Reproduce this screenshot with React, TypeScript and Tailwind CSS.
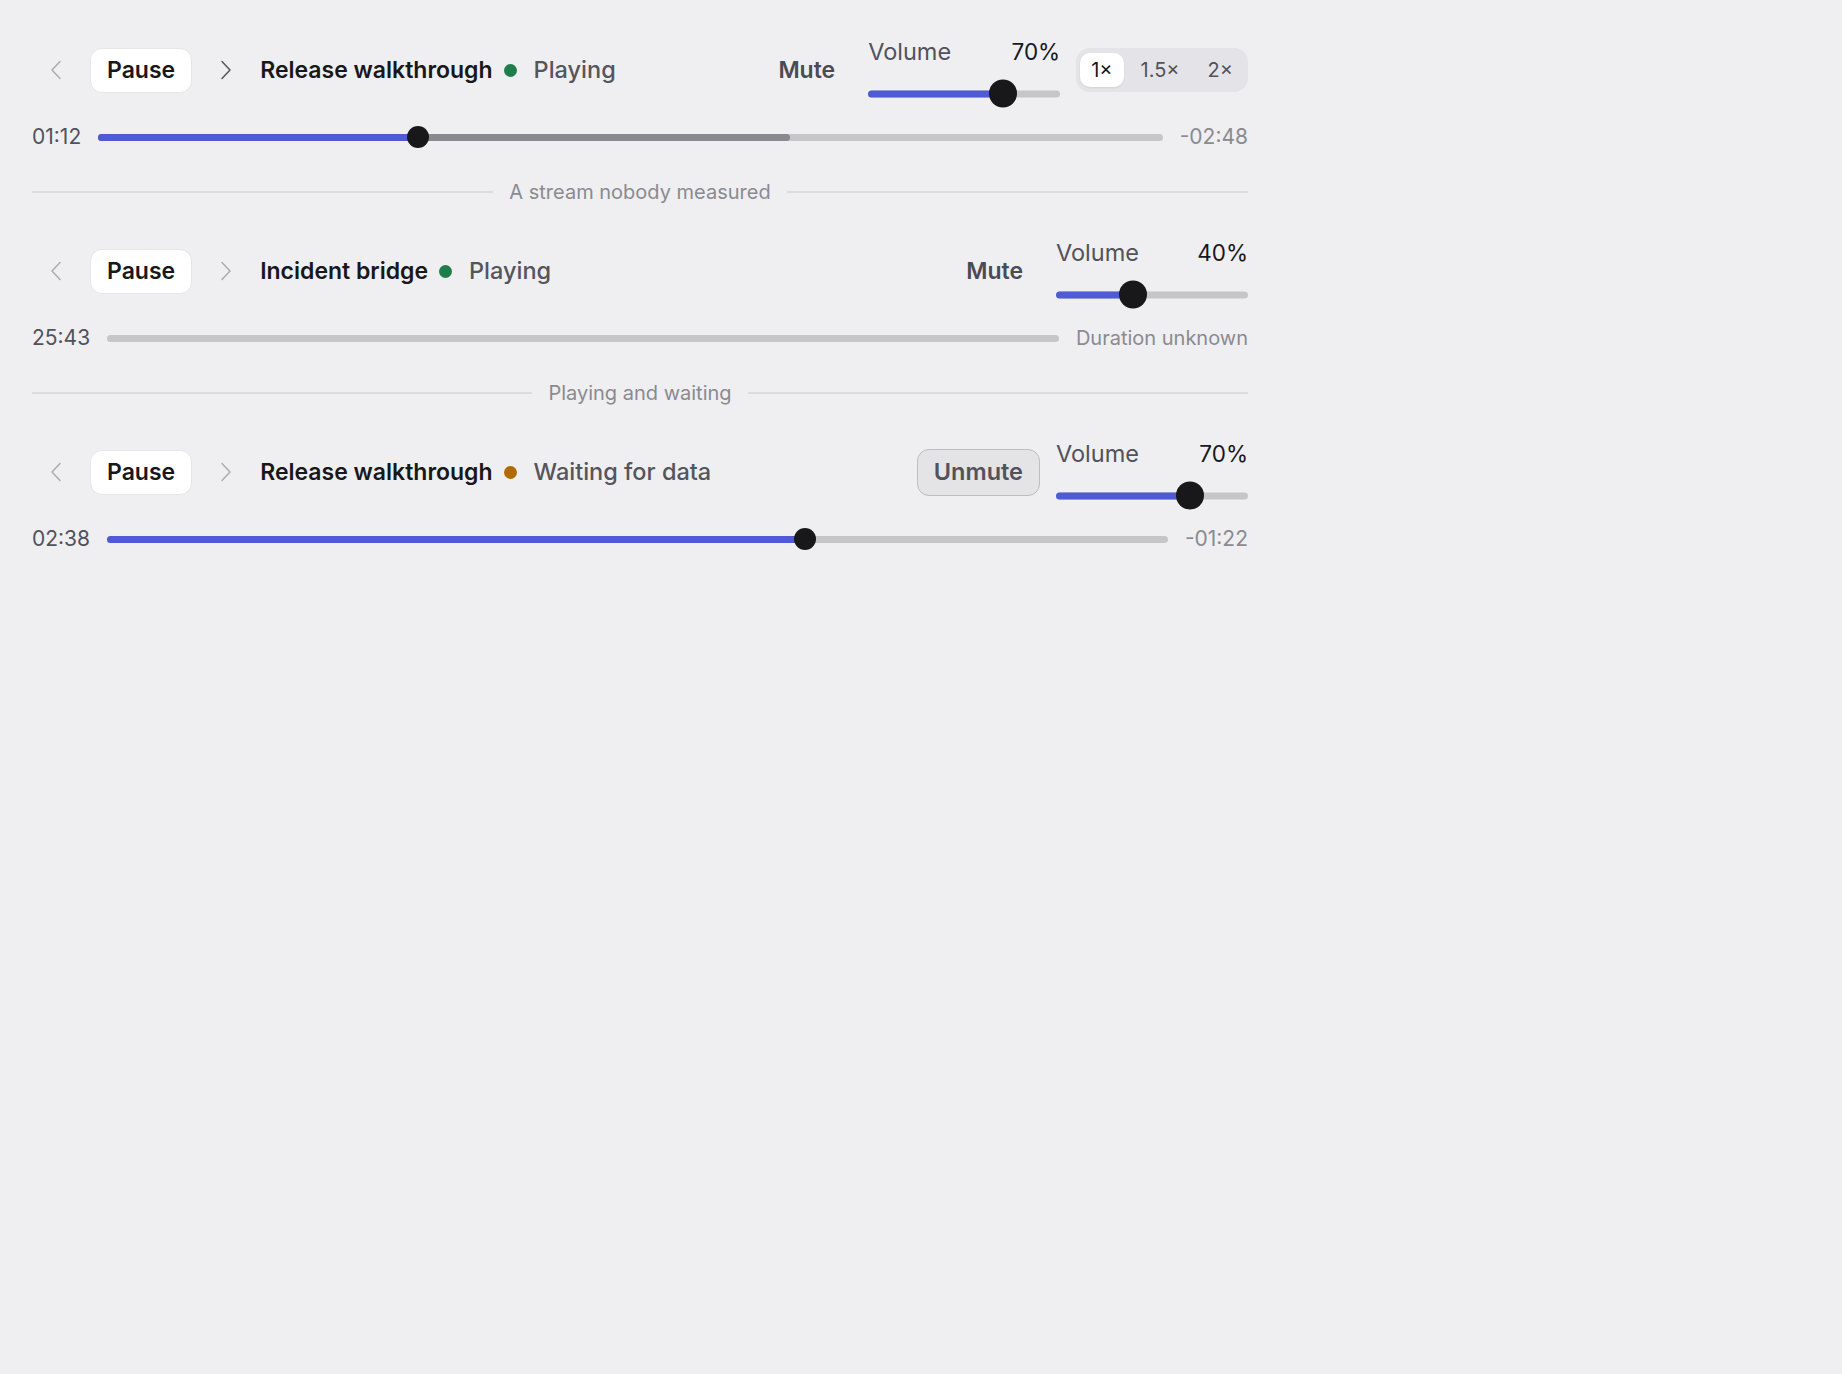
import React from "react";

type PlayerProps = {
  title: string;
  dot: string;
  status: string;
  muted: boolean;
  volume: number;
  showSpeed: boolean;
  time: string;
  right: string;
  rightSize: string;
  progress: number | null;
  buffered?: number;
  nextActive: boolean;
};

function Chevron({ dir, className }: { dir: "left" | "right"; className: string }) {
  return (
    <svg width="12" height="20" viewBox="0 0 12 20" fill="none" className={className}>
      <path
        d={dir === "left" ? "M10 1.5 L2 10 L10 18.5" : "M2 1.5 L10 10 L2 18.5"}
        stroke="currentColor"
        strokeWidth="1.5"
        strokeLinecap="round"
        strokeLinejoin="round"
      />
    </svg>
  );
}

function Volume({ value }: { value: number }) {
  return (
    <div className="w-[192px] flex flex-col gap-[21px]">
      <div className="flex justify-between items-center h-[26px] leading-[26px]">
        <span className="text-[23.5px] text-[#52525b]">Volume</span>
        <span className="text-[22.5px] text-[#18181b]">{value}%</span>
      </div>
      <div className="relative h-4">
        <div className="absolute left-0 right-0 top-1/2 -translate-y-1/2 h-[7px] rounded-full bg-[#c6c6c9]">
          <div className="absolute left-0 top-0 bottom-0 rounded-full bg-[#4f5bd5]" style={{ width: `${value}%` }} />
          <div
            className="absolute top-1/2 -translate-y-1/2 -translate-x-1/2 w-[28px] h-[28px] rounded-full bg-[#18181b]"
            style={{ left: `${value}%` }}
          />
        </div>
      </div>
    </div>
  );
}

function Speed() {
  return (
    <div className="flex items-center gap-[6px] h-[44px] p-1 rounded-[14px] bg-[#e4e4e8]">
      <div className="h-[34px] px-[11px] flex items-center rounded-[10px] bg-white shadow-[0_1px_2px_rgba(0,0,0,0.08)] text-[20px] text-[#18181b]">
        1×
      </div>
      <div className="h-[34px] px-[11px] flex items-center text-[20px] text-[#52525b]">1.5×</div>
      <div className="h-[34px] px-[11px] flex items-center text-[20px] text-[#52525b]">2×</div>
    </div>
  );
}

function Player(p: PlayerProps) {
  return (
    <div className="flex flex-col">
      <div className="h-[64px] flex items-center">
        <div className="flex items-center gap-[10px]">
          <div className="w-[48px] h-[44px] flex items-center justify-center">
            <Chevron dir="left" className="text-[#ababb1]" />
          </div>
          <div className="h-[45px] px-4 flex items-center rounded-[12px] bg-white border border-[#e6e6e9] text-[23px] font-semibold text-[#18181b]">
            Pause
          </div>
          <div className="w-[48px] h-[44px] flex items-center justify-center">
            <Chevron dir="right" className={p.nextActive ? "text-[#55555c]" : "text-[#ababb1]"} />
          </div>
          <span className="text-[23px] font-semibold text-[#18181b]">{p.title}</span>
          <span className="ml-[1px] w-[13px] h-[13px] rounded-full" style={{ backgroundColor: p.dot }} />
          <span className="ml-[7px] text-[23.5px] font-medium text-[#55555d]">{p.status}</span>
        </div>
        <div className="flex-1" />
        <div className="flex items-center gap-4">
          {p.muted ? (
            <div className="h-[47px] px-4 flex items-center rounded-[12px] bg-[#e4e4e7] border border-[#bdbdc2] text-[23.5px] font-semibold text-[#52525b]">
              Unmute
            </div>
          ) : (
            <div className="h-[45px] px-4 flex items-center border border-transparent text-[23px] font-semibold text-[#4b4b53]">
              Mute
            </div>
          )}
          <Volume value={p.volume} />
          {p.showSpeed && <Speed />}
        </div>
      </div>
      <div className="mt-[20px] h-[30px] flex items-center gap-[17px]">
        <span className="text-[21px] text-[#52525b]">{p.time}</span>
        <div className="relative flex-1 h-[7px] rounded-full bg-[#c6c6c9]">
          {p.buffered !== undefined && (
            <div className="absolute left-0 top-0 bottom-0 rounded-full bg-[#89898f]" style={{ width: `${p.buffered}%` }} />
          )}
          {p.progress !== null && (
            <>
              <div className="absolute left-0 top-0 bottom-0 rounded-full bg-[#4f5bd5]" style={{ width: `${p.progress}%` }} />
              <div
                className="absolute top-1/2 -translate-y-1/2 -translate-x-1/2 w-[22px] h-[22px] rounded-full bg-[#18181b]"
                style={{ left: `${p.progress}%` }}
              />
            </>
          )}
        </div>
        <span className={`${p.rightSize} text-[#8a8a90]`}>{p.right}</span>
      </div>
    </div>
  );
}

function Divider({ label, className }: { label: string; className: string }) {
  return (
    <div className={`h-[28px] flex items-center gap-4 ${className}`}>
      <div className="flex-1 h-[2px] bg-[#dcdcdf]" />
      <span className="text-[20px] text-[#8a8a90]">{label}</span>
      <div className="flex-1 h-[2px] bg-[#dcdcdf]" />
    </div>
  );
}

export default function App() {
  return (
    <div className="min-h-screen bg-[#efeff1] [font-family:Inter,'Noto_Sans',sans-serif]">
      <div className="w-[1216px] ml-8 pt-[38px] flex flex-col">
        <Player
          title="Release walkthrough"
          dot="#1f7d4b"
          status="Playing"
          muted={false}
          volume={70}
          showSpeed={true}
          time="01:12"
          right="-02:48"
          rightSize="text-[21px]"
          progress={30}
          buffered={65}
          nextActive={true}
        />
        <Divider label="A stream nobody measured" className="mt-[26px]" />
        <div className="mt-[33px]">
          <Player
            title="Incident bridge"
            dot="#1f7d4b"
            status="Playing"
            muted={false}
            volume={40}
            showSpeed={false}
            time="25:43"
            right="Duration unknown"
            rightSize="text-[20px]"
            progress={null}
            nextActive={false}
          />
        </div>
        <Divider label="Playing and waiting" className="mt-[26px]" />
        <div className="mt-[33px]">
          <Player
            title="Release walkthrough"
            dot="#b06a00"
            status="Waiting for data"
            muted={true}
            volume={70}
            showSpeed={false}
            time="02:38"
            right="-01:22"
            rightSize="text-[21px]"
            progress={65.8}
            nextActive={false}
          />
        </div>
      </div>
    </div>
  );
}
